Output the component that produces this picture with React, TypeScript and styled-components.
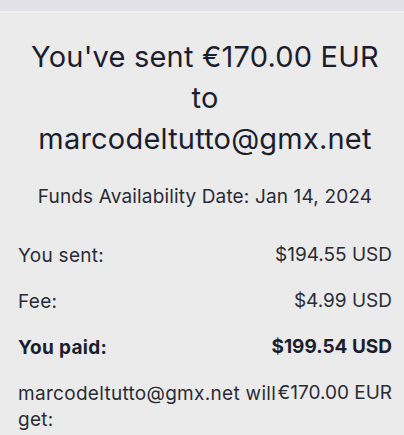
import React from 'react';
import styled, { createGlobalStyle } from 'styled-components';

const GlobalStyle = createGlobalStyle`
  html, body {
    margin: 0;
    padding: 0;
    background: #ebebeb;
  }
  body {
    font-family: Inter, "Noto Sans", "Liberation Sans", sans-serif;
    color: #22242f;
  }
`;

const TopBar = styled.div`
  height: 11px;
  background: #e2e1ea;
  border-bottom: 2px solid #efeff1;
`;

const Content = styled.div`
  padding: 23px 12px 0 18px;
`;

const Title = styled.h1`
  margin: 0;
  font-size: 29px;
  line-height: 41px;
  letter-spacing: 0.2px;
  font-weight: 400;
  text-align: center;
  color: #1b1e2d;
`;

const Availability = styled.p`
  margin: 26px 0 0;
  font-size: 19px;
  line-height: 24px;
  letter-spacing: 0.15px;
  text-align: center;
  color: #2a2c36;
`;

const Summary = styled.div`
  margin-top: 34px;
  display: flex;
  flex-direction: column;
  gap: 20px;
`;

const Row = styled.div<{ $strong?: boolean }>`
  display: flex;
  justify-content: space-between;
  align-items: flex-start;
  font-size: 19px;
  line-height: 24px;
  font-weight: ${(p) => (p.$strong ? 700 : 400)};
  color: ${(p) => (p.$strong ? '#1b1e2d' : '#2a2c36')};
`;

const Label = styled.span`
  line-height: 26px;
  letter-spacing: 0.3px;
`;

const Value = styled.span`
  white-space: nowrap;
  text-align: right;
`;

type Line = { label: string; value: string; strong?: boolean };

const lines: Line[] = [
  { label: 'You sent:', value: '$194.55 USD' },
  { label: 'Fee:', value: '$4.99 USD' },
  { label: 'You paid:', value: '$199.54 USD', strong: true },
  { label: 'marcodeltutto@gmx.net will get:', value: '€170.00 EUR' },
];

export default function App() {
  return (
    <>
      <GlobalStyle />
      <TopBar />
      <Content>
        <Title>
          You've sent €170.00 EUR
          <br />
          to
          <br />
          marcodeltutto@gmx.net
        </Title>
        <Availability>Funds Availability Date: Jan 14, 2024</Availability>
        <Summary>
          {lines.map((l) => (
            <Row key={l.label} $strong={l.strong}>
              <Label>{l.label}</Label>
              <Value>{l.value}</Value>
            </Row>
          ))}
        </Summary>
      </Content>
    </>
  );
}
